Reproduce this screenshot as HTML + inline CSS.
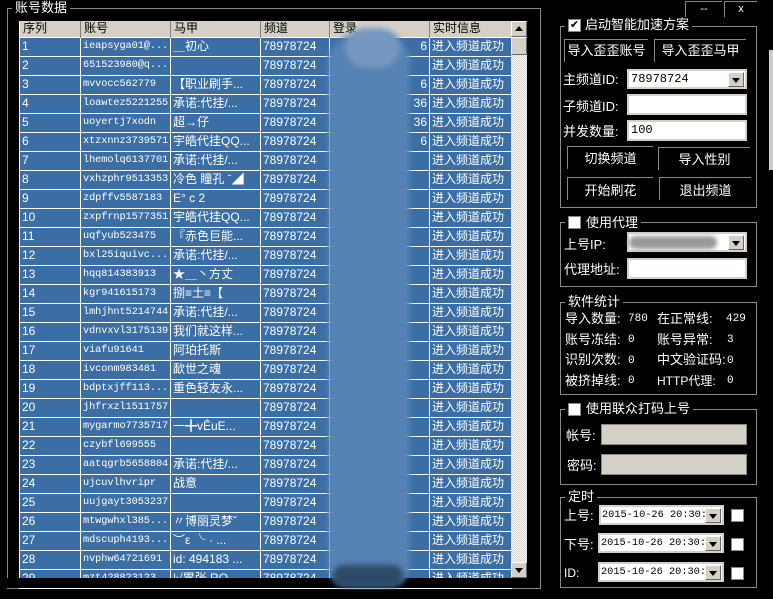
<!DOCTYPE html>
<html><head><meta charset="utf-8"><style>
*{margin:0;padding:0;box-sizing:border-box}
body{width:773px;height:599px;background:#000;position:relative;overflow:hidden;font-family:"Liberation Sans","Noto Sans CJK SC",sans-serif;font-size:12px;color:#fff}
.a{position:absolute}
.gb{position:absolute;border:1px solid #8a8a8a}
.gt{position:absolute;background:#000;padding:0 3px;font-size:13px;line-height:14px;color:#fff}
table{border-collapse:collapse;table-layout:fixed}
td{border:1px solid #fff;height:19px;padding:0 2px;white-space:nowrap;overflow:hidden;font-size:12px;line-height:17px;background:#3a6ea5;color:#fff}
td.m{font-family:"Liberation Mono","Noto Sans CJK SC",monospace;font-size:10.3px;letter-spacing:-0.1px}
th{background:#d4d0c8;color:#000;font-weight:normal;text-align:left;height:16px;padding:0 3px;font-size:12px;line-height:15px;border-right:1px solid #808080;border-left:1px solid #fff}
.cb{position:absolute;width:13px;height:13px;background:#fff;border:1px solid #888}
.btn{position:absolute;border-top:1px solid #888;border-left:1px solid #888;text-align:center;font-size:13px;line-height:28px;color:#fff}
.in{position:absolute;background:#fff;border:2px solid #d4d0c8;color:#000;font-size:12px;line-height:16px;padding-left:2px;font-family:"Liberation Mono",monospace}
.dd{position:absolute;right:1px;top:1px;width:16px;height:15px;background:#d4d0c8;border:1px solid #fff;border-right-color:#666;border-bottom-color:#666}
.dd:after{content:"";position:absolute;left:3px;top:5px;border:4px solid transparent;border-top:5px solid #000}
.lb{position:absolute;font-size:13px;line-height:16px;color:#fff;white-space:nowrap}
.v{font-size:11px;font-family:"Liberation Mono",monospace}
</style></head><body>
<div class="gb" style="left:7px;top:8px;width:534px;height:581px"></div>
<div class="gt" style="left:12px;top:1px">账号数据</div>
<table class="a" style="left:19px;top:21px;width:492px">
<colgroup><col style="width:61px"><col style="width:90px"><col style="width:90px"><col style="width:69px"><col style="width:100px"><col style="width:82px"></colgroup>
<tr><th>序列</th><th>账号</th><th>马甲</th><th>频道</th><th>登录</th><th>实时信息</th></tr>
<tr><td>1</td><td class="m">ieapsyga01@...</td><td>＿初心</td><td>78978724</td><td style="text-align:right">6</td><td>进入频道成功</td></tr>
<tr><td>2</td><td class="m">651523980@q...</td><td></td><td>78978724</td><td></td><td>进入频道成功</td></tr>
<tr><td>3</td><td class="m">mvvocc562779</td><td>【职业刷手...</td><td>78978724</td><td style="text-align:right">6</td><td>进入频道成功</td></tr>
<tr><td>4</td><td class="m">loawtez5221255</td><td>承诺:代挂/...</td><td>78978724</td><td style="text-align:right">36</td><td>进入频道成功</td></tr>
<tr><td>5</td><td class="m">uoyertj7xodn</td><td>超→仔</td><td>78978724</td><td style="text-align:right">36</td><td>进入频道成功</td></tr>
<tr><td>6</td><td class="m">xtzxnnz3739571</td><td>宇皓代挂QQ...</td><td>78978724</td><td style="text-align:right">6</td><td>进入频道成功</td></tr>
<tr><td>7</td><td class="m">lhemolq6137701</td><td>承诺:代挂/...</td><td>78978724</td><td></td><td>进入频道成功</td></tr>
<tr><td>8</td><td class="m">vxhzphr9513353</td><td>冷色 瞳孔 ˉ◢</td><td>78978724</td><td></td><td>进入频道成功</td></tr>
<tr><td>9</td><td class="m">zdpffv5587183</td><td>E° c 2</td><td>78978724</td><td></td><td>进入频道成功</td></tr>
<tr><td>10</td><td class="m">zxpfrnp1577351</td><td>宇皓代挂QQ...</td><td>78978724</td><td></td><td>进入频道成功</td></tr>
<tr><td>11</td><td class="m">uqfyub523475</td><td>『赤色巨能...</td><td>78978724</td><td></td><td>进入频道成功</td></tr>
<tr><td>12</td><td class="m">bxl25iquivc...</td><td>承诺:代挂/...</td><td>78978724</td><td></td><td>进入频道成功</td></tr>
<tr><td>13</td><td class="m">hqq814383913</td><td>★＿丶方丈</td><td>78978724</td><td></td><td>进入频道成功</td></tr>
<tr><td>14</td><td class="m">kgr941615173</td><td>捌≡土≡【</td><td>78978724</td><td></td><td>进入频道成功</td></tr>
<tr><td>15</td><td class="m">lmhjhnt5214744</td><td>承诺:代挂/...</td><td>78978724</td><td></td><td>进入频道成功</td></tr>
<tr><td>16</td><td class="m">vdnvxvl3175139</td><td>我们就这样...</td><td>78978724</td><td></td><td>进入频道成功</td></tr>
<tr><td>17</td><td class="m">viafu91641</td><td>阿珀托斯</td><td>78978724</td><td></td><td>进入频道成功</td></tr>
<tr><td>18</td><td class="m">ivconm983481</td><td>歃世之魂</td><td>78978724</td><td></td><td>进入频道成功</td></tr>
<tr><td>19</td><td class="m">bdptxjff113...</td><td>重色轻友永...</td><td>78978724</td><td></td><td>进入频道成功</td></tr>
<tr><td>20</td><td class="m">jhfrxzl1511757</td><td></td><td>78978724</td><td></td><td>进入频道成功</td></tr>
<tr><td>21</td><td class="m">mygarmo7735717</td><td>一╋vÊuE...</td><td>78978724</td><td></td><td>进入频道成功</td></tr>
<tr><td>22</td><td class="m">czybfl699555</td><td></td><td>78978724</td><td></td><td>进入频道成功</td></tr>
<tr><td>23</td><td class="m">aatqgrb5658804</td><td>承诺:代挂/...</td><td>78978724</td><td></td><td>进入频道成功</td></tr>
<tr><td>24</td><td class="m">ujcuvlhvripr</td><td>战意</td><td>78978724</td><td></td><td>进入频道成功</td></tr>
<tr><td>25</td><td class="m">uujgayt3053237</td><td></td><td>78978724</td><td></td><td>进入频道成功</td></tr>
<tr><td>26</td><td class="m">mtwgwhxl385...</td><td>〃博丽灵梦ˇ</td><td>78978724</td><td></td><td>进入频道成功</td></tr>
<tr><td>27</td><td class="m">mdscuph4193...</td><td>︶ε ╰ ·  ...</td><td>78978724</td><td></td><td>进入频道成功</td></tr>
<tr><td>28</td><td class="m">nvphw64721691</td><td>id: 494183 ...</td><td>78978724</td><td></td><td>进入频道成功</td></tr>
<tr><td>29</td><td class="m">mzt428823123</td><td>|√胃张 RO</td><td>78978724</td><td></td><td>进入频道成功</td></tr>
</table>
<div class="a" style="left:0;top:578px;width:540px;height:10px;background:#000"></div>
<div class="a" style="left:511px;top:21px;width:16px;height:557px;background:repeating-conic-gradient(#fff 0 25%,#d4d0c8 0 50%) 0 0/2px 2px"></div>
<div class="a" style="left:511px;top:21px;width:16px;height:16px;background:#d4d0c8;border:1px solid #fff;border-right-color:#666;border-bottom-color:#666"><div class="a" style="left:3px;top:4px;border:4px solid transparent;border-bottom:5px solid #000;border-top:0"></div></div>
<div class="a" style="left:511px;top:37px;width:16px;height:18px;background:#d4d0c8;border:1px solid #fff;border-right-color:#666;border-bottom-color:#666"></div>
<div class="a" style="left:511px;top:562px;width:16px;height:16px;background:#d4d0c8;border:1px solid #fff;border-right-color:#666;border-bottom-color:#666"><div class="a" style="left:3px;top:5px;border:4px solid transparent;border-top:5px solid #000;border-bottom:0"></div></div>
<!-- blur blob -->
<div class="a" style="left:328px;top:36px;width:82px;height:550px;background:#5682b3;border-radius:25px 25px 20px 20px;filter:blur(3px)"></div>
<div class="a" style="left:345px;top:28px;width:55px;height:40px;background:#7698c0;border-radius:20px;filter:blur(3px)"></div>
<div class="a" style="left:333px;top:565px;width:70px;height:22px;background:#2e4a68;border-radius:10px;filter:blur(3px)"></div>
<!-- right -->
<div class="a" style="left:685px;top:1px;width:37px;height:16px;border-left:1px solid #888;border-top:1px solid #888;text-align:center;font-size:11px;line-height:14px">--</div>
<div class="a" style="left:724px;top:1px;width:33px;height:16px;border-left:1px solid #888;border-top:1px solid #888;text-align:center;font-size:11px;line-height:14px">x</div>
<div class="a" style="left:769px;top:50px;width:4px;height:120px;background:#ccc"></div>
<div class="gb" style="left:560px;top:26px;width:197px;height:182px"></div>
<div class="gt" style="left:565px;top:18px;padding-left:2px">&nbsp;&nbsp;&nbsp;&nbsp;&nbsp;启动智能加速方案</div>
<div class="cb" style="left:568px;top:19px;font-size:11px;line-height:11px;color:#000;text-align:center">✔</div>
<div class="btn" style="left:564px;top:39px;width:84px;height:23px;line-height:22px">导入歪歪账号</div>
<div class="btn" style="left:654px;top:39px;width:92px;height:23px;line-height:22px">导入歪歪马甲</div>
<div class="lb" style="left:563px;top:72px">主频道ID:</div>
<div class="in" style="left:627px;top:69px;width:120px;height:20px">78978724<div class="dd"></div></div>
<div class="lb" style="left:563px;top:99px">子频道ID:</div>
<div class="in" style="left:627px;top:94px;width:120px;height:21px"></div>
<div class="lb" style="left:563px;top:124px">并发数量:</div>
<div class="in" style="left:627px;top:120px;width:120px;height:21px">100</div>
<div class="btn" style="left:567px;top:146px;width:86px;height:23px;line-height:23px">切换频道</div>
<div class="btn" style="left:658px;top:147px;width:92px;height:23px;line-height:23px">导入性别</div>
<div class="btn" style="left:567px;top:177px;width:86px;height:23px;line-height:25px">开始刷花</div>
<div class="btn" style="left:659px;top:177px;width:92px;height:23px;line-height:25px">退出频道</div>
<div class="gb" style="left:560px;top:222px;width:197px;height:65px"></div>
<div class="gt" style="left:565px;top:216px">&nbsp;&nbsp;&nbsp;&nbsp;&nbsp;使用代理</div>
<div class="cb" style="left:568px;top:216px"></div>
<div class="lb" style="left:564px;top:237px">上号IP:</div>
<div class="in" style="left:627px;top:232px;width:120px;height:20px;font-family:sans-serif"><div class="a" style="left:0;top:2px;width:88px;height:13px;background:#999;border-radius:7px;filter:blur(2px)"></div><div class="dd"></div></div>
<div class="lb" style="left:564px;top:262px">代理地址:</div>
<div class="in" style="left:627px;top:258px;width:120px;height:21px"></div>
<div class="gb" style="left:560px;top:302px;width:197px;height:93px"></div>
<div class="gt" style="left:565px;top:295px">软件统计</div>
<div class="lb" style="left:565px;top:311px">导入数量:</div><div class="lb v" style="left:628px;top:311px">780</div>
<div class="lb" style="left:657px;top:311px">在正常线:</div><div class="lb v" style="left:726px;top:311px">429</div>
<div class="lb" style="left:565px;top:332px">账号冻结:</div><div class="lb v" style="left:628px;top:332px">0</div>
<div class="lb" style="left:657px;top:332px">账号异常:</div><div class="lb v" style="left:727px;top:332px">3</div>
<div class="lb" style="left:565px;top:352px">识别次数:</div><div class="lb v" style="left:628px;top:353px">0</div>
<div class="lb" style="left:657px;top:352px">中文验证码:</div><div class="lb v" style="left:727px;top:353px">0</div>
<div class="lb" style="left:565px;top:373px">被挤掉线:</div><div class="lb v" style="left:628px;top:373px">0</div>
<div class="lb" style="left:657px;top:373px;font-size:12px">HTTP代理:</div><div class="lb v" style="left:727px;top:373px">0</div>
<div class="gb" style="left:560px;top:409px;width:197px;height:76px"></div>
<div class="gt" style="left:565px;top:402px">&nbsp;&nbsp;&nbsp;&nbsp;&nbsp;使用联众打码上号</div>
<div class="cb" style="left:568px;top:403px"></div>
<div class="lb" style="left:566px;top:428px">帐号:</div>
<div class="a" style="left:601px;top:424px;width:146px;height:21px;background:#d4d0c8;border:1px solid #888"></div>
<div class="lb" style="left:567px;top:458px">密码:</div>
<div class="a" style="left:601px;top:454px;width:146px;height:21px;background:#d4d0c8;border:1px solid #888"></div>
<div class="gb" style="left:560px;top:497px;width:197px;height:91px"></div>
<div class="gt" style="left:565px;top:490px">定时</div>
<div class="lb" style="left:564px;top:508px">上号:</div>
<div class="in" style="left:599px;top:505px;width:125px;height:20px;font-size:10.3px;padding-left:1px;overflow:hidden">2015-10-26 20:30:4<div class="dd"></div></div>
<div class="cb" style="left:731px;top:509px"></div>
<div class="lb" style="left:564px;top:537px">下号:</div>
<div class="in" style="left:598px;top:533px;width:126px;height:20px;font-size:10.3px;padding-left:1px;overflow:hidden">2015-10-26 20:30:4<div class="dd"></div></div>
<div class="cb" style="left:731px;top:538px"></div>
<div class="lb" style="left:564px;top:565px;font-size:12px">ID:</div>
<div class="in" style="left:598px;top:562px;width:126px;height:20px;font-size:10.3px;padding-left:1px;overflow:hidden">2015-10-26 20:30:4<div class="dd"></div></div>
<div class="cb" style="left:731px;top:567px"></div>
</body></html>
